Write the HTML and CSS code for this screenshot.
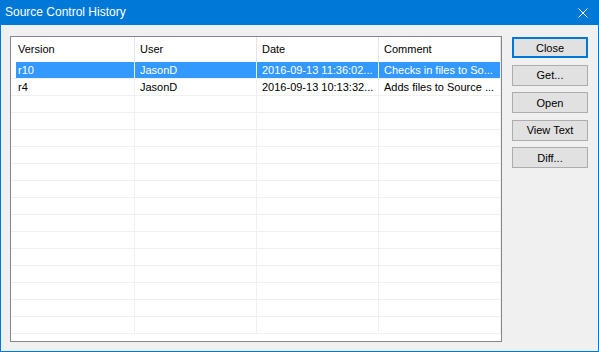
FILE: index.html
```html
<!DOCTYPE html>
<html>
<head>
  <meta charset="utf-8">
  <title>Source Control History</title>
  <link rel="stylesheet" href="styles.css">
</head>
<body>
  <div class="window">
    <div class="titlebar">
      <span class="title">Source Control History</span>
      <div class="title-close">
        <svg width="10" height="10" viewBox="0 0 10 10">
          <path d="M0.5 0.5 L9.5 9.5 M9.5 0.5 L0.5 9.5" stroke="#fff" stroke-width="1" fill="none"/>
        </svg>
      </div>
    </div>

    <div class="client">
      <div class="listview">
        <div class="lv-header">
          <div class="cell">Version</div>
          <div class="cell">User</div>
          <div class="cell">Date</div>
          <div class="cell">Comment</div>
        </div>
        <div class="lv-body" id="lv-body">
          <div class="row selected">
            <div class="cell">r10</div>
            <div class="cell">JasonD</div>
            <div class="cell">2016-09-13 11:36:02...</div>
            <div class="cell">Checks in files to So...</div>
          </div>
          <div class="row">
            <div class="cell">r4</div>
            <div class="cell">JasonD</div>
            <div class="cell">2016-09-13 10:13:32...</div>
            <div class="cell">Adds files to Source ...</div>
          </div>
        </div>
      </div>

      <div class="buttons">
        <button class="btn default">Close</button>
        <button class="btn">Get...</button>
        <button class="btn">Open</button>
        <button class="btn">View Text</button>
        <button class="btn">Diff...</button>
      </div>
    </div>
  </div>

  <script>
    // fill the rest of the list with empty rows
    const body = document.getElementById('lv-body');
    for (let i = 0; i < 14; i++) {
      const row = document.createElement('div');
      row.className = 'row';
      for (let c = 0; c < 4; c++) {
        const cell = document.createElement('div');
        cell.className = 'cell';
        row.appendChild(cell);
      }
      body.appendChild(row);
    }
  </script>
</body>
</html>
```

FILE: styles.css
```css
body {
  margin: 0;
  font-family: "Liberation Sans", Arial, sans-serif;
  font-size: 11px;
  color: #000;
  background: #f0f0f0;
}
.window {
  width: 599px;
  height: 352px;
  box-sizing: border-box;
  border: 1px solid #0078d7;
  border-top: none;
  background: #f0f0f0;
  display: flex;
  flex-direction: column;
}
.titlebar {
  height: 25px;
  background: #0078d7;
  display: flex;
  align-items: center;
  justify-content: space-between;
  padding: 0 10px 0 4px;
}
.title {
  color: #fff;
  font-size: 12px;
  line-height: 25px;
}
.title-close {
  width: 10px;
  height: 10px;
  margin-top: 1px;
}
.title-close svg {
  display: block;
}
.client {
  display: flex;
  gap: 10px;
  padding: 11px 0 0 9px;
}
.listview {
  width: 492px;
  height: 306px;
  box-sizing: border-box;
  border: 1px solid #828790;
  background: #fff;
  overflow: hidden;
}
.lv-header,
.row {
  display: flex;
}
.lv-header {
  height: 25px;
}
.cell {
  width: 122px;
  box-sizing: border-box;
  border-right: 1px solid #f0f0f0;
  padding-left: 5px;
  white-space: nowrap;
  overflow: hidden;
}
.cell:first-child {
  width: 124px;
  padding-left: 7px;
}
.lv-header .cell {
  line-height: 25px;
  border-right-color: #e5e5e5;
}
.row {
  height: 17px;
  box-sizing: border-box;
  border-bottom: 1px solid #f0f0f0;
}
.row .cell {
  line-height: 16px;
}
.row .cell:first-child {
  padding-left: 5px;
  text-indent: 2px;
  background-clip: content-box;
}
.row.selected .cell {
  background-color: #3399ff;
  color: #fff;
}
.buttons {
  display: flex;
  flex-direction: column;
  gap: 6.5px;
  padding-top: 1px;
}
.btn {
  width: 76px;
  height: 21px;
  box-sizing: border-box;
  margin: 0;
  padding: 0;
  background: #e1e1e1;
  border: 1px solid #adadad;
  font-family: "Liberation Sans", Arial, sans-serif;
  font-size: 11px;
  color: #000;
}
.btn.default {
  border: 2px solid #0078d7;
}
```
